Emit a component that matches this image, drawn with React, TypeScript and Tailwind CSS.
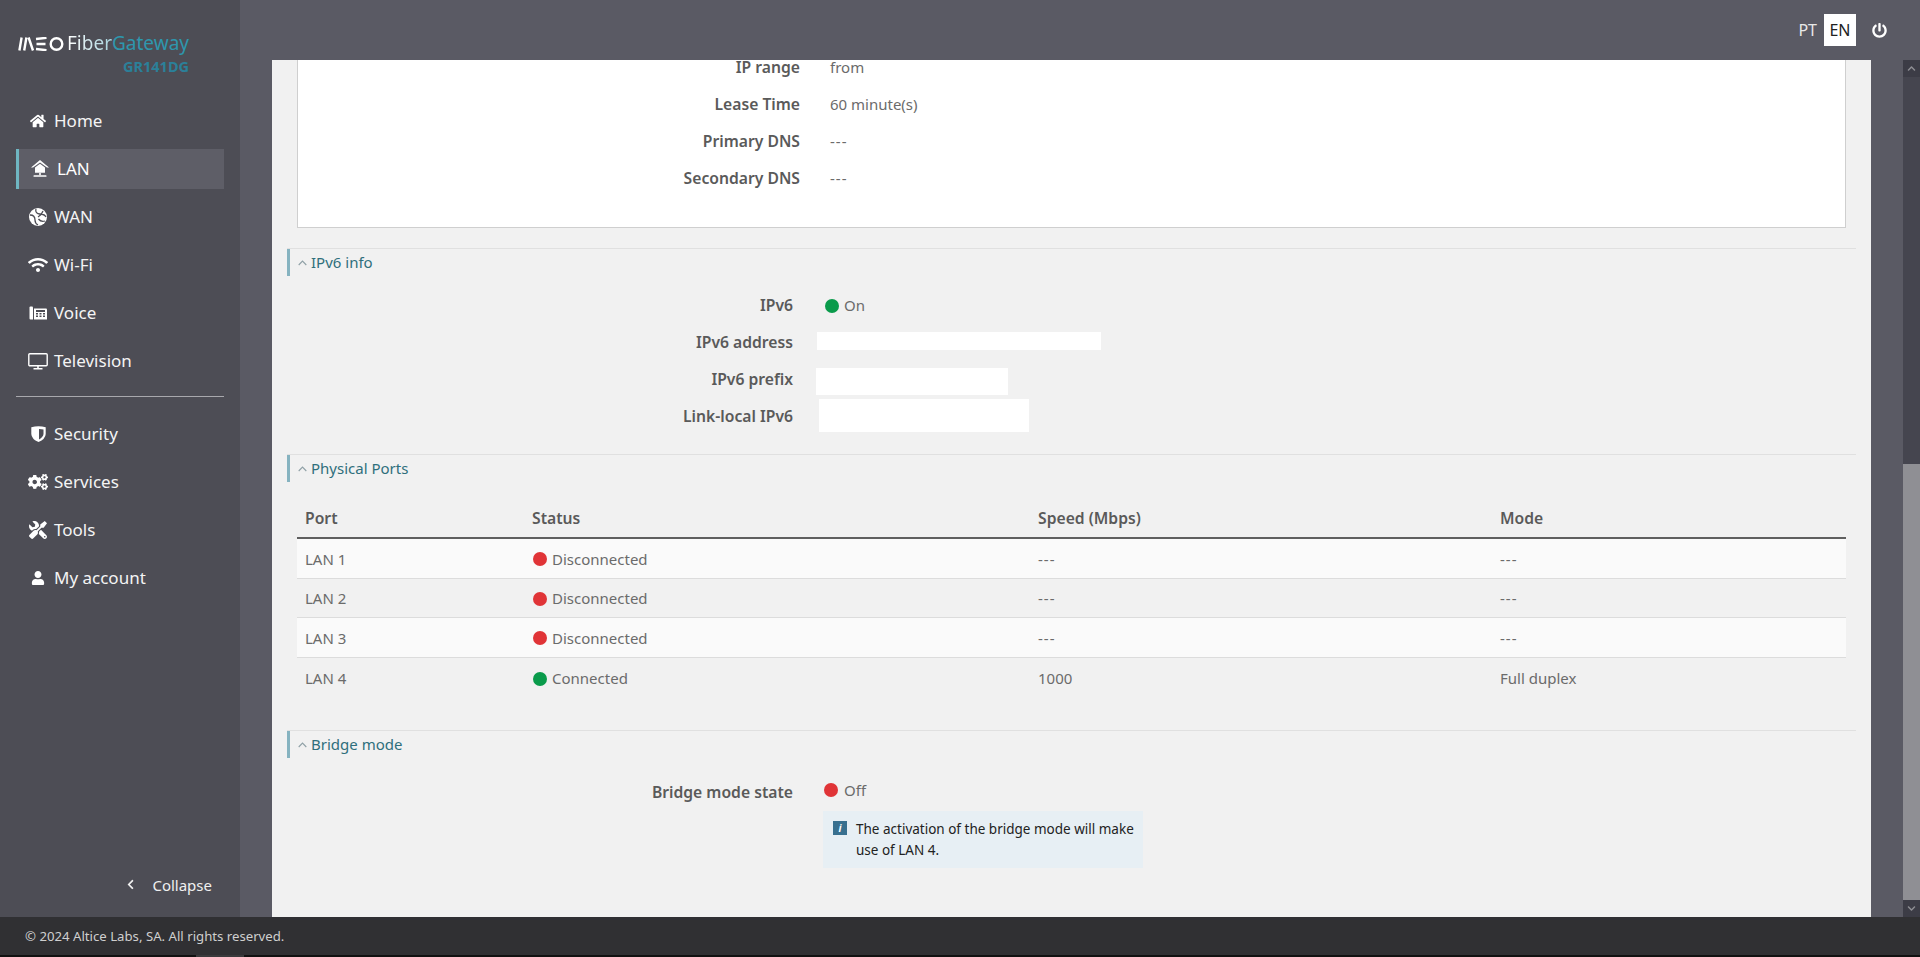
import React from "react";
import { FaHome, FaWifi, FaCogs, FaTools, FaUser, FaChevronLeft, FaChevronUp, FaChevronDown, FaPowerOff } from "react-icons/fa";

const LanIcon = () => (
  <svg width="18" height="18" viewBox="0 0 18 18" fill="#fff">
    <path d="M9 0 L18 7.6 L16 7.6 L9 2.4 L2 7.6 L0 7.6 Z" />
    <path d="M4 7.6 L9 3.8 L14 7.6 L14 12.8 L4 12.8 Z" />
    <rect x="8.2" y="12.8" width="1.6" height="2.4" />
    <rect x="2.5" y="15.2" width="13" height="1.6" rx="0.6" />
  </svg>
);

const GlobeIcon = () => (
  <svg width="18" height="18" viewBox="0 0 18 18">
    <circle cx="9" cy="9" r="9" fill="#fff" />
    <path d="M7 1 C6 4 8 6 11 6 C14 6 16 7 17 9 M1 7 C4 7 6 9 6 12 C6 14 7 16 9 17 M14 3 C13 6 11 8 9 9 M16 13 C13 14 11 13 9.5 11" fill="none" stroke="#4d4d55" strokeWidth="1.3" />
  </svg>
);

const ShieldIcon = () => (
  <svg width="15" height="16" viewBox="0 0 15 16">
    <path d="M0.3 1.2 Q7.5 -0.8 14.7 1.2 L14.7 8 Q14.5 13 7.5 16 Q0.5 13 0.3 8 Z" fill="#fff" />
    <path d="M8 3 Q10.5 3 12.5 3.5 L12.5 8 Q12.3 11 8 13.4 Z" fill="#4d4d55" />
  </svg>
);

const VoiceIcon = () => (
  <svg width="18" height="14" viewBox="0 0 18 14" fill="#fff">
    <path d="M0.5 1.5 Q0.5 0.5 1.5 0.5 L3 0.5 Q4 0.5 4 1.5 L4 13.5 L1.5 13.5 Q0.5 13.5 0.5 12.5 Z" />
    <path d="M5 2.5 L17 2.5 Q18 2.5 18 3.5 L18 13.5 L5 13.5 Z" />
    <g fill="#4d4d55">
      <rect x="7" y="4" width="9" height="2" />
      <rect x="7" y="7" width="2" height="1.5" /><rect x="10.5" y="7" width="2" height="1.5" /><rect x="14" y="7" width="2" height="1.5" />
      <rect x="7" y="9.5" width="2" height="1.5" /><rect x="10.5" y="9.5" width="2" height="1.5" /><rect x="14" y="9.5" width="2" height="1.5" />
    </g>
  </svg>
);

const TvIcon = () => (
  <svg width="20" height="17" viewBox="0 0 20 17" fill="none" stroke="#fff" strokeWidth="1.4">
    <rect x="0.8" y="0.8" width="18.4" height="11.9" rx="1" />
    <path d="M10 12.7 V15.5 M5.5 15.8 H14.5" strokeWidth="1.6" />
  </svg>
);

const Logo = () => (
  <svg width="46" height="14" viewBox="0 0 46 14" fill="none" stroke="#fff" strokeWidth="2.4">
    <path d="M3.6 0.5 L1.4 13.5 M8.4 0.5 L6.2 13.5 M10.6 0.5 L15 13.5" />
    <path d="M18 2 L28.5 0.8 M18.5 7 L27.5 7 M18 12 L28.5 13.2" />
    <circle cx="38.5" cy="7" r="5.8" />
  </svg>
);

const SmallChevron = () => (
  <svg width="9" height="6" viewBox="0 0 9 6" fill="none" stroke="#8fa0a6" strokeWidth="1.1" className="mr-[4px]">
    <path d="M0.7 5 L4.5 1 L8.3 5" />
  </svg>
);

const main = [
  { label: "Home", icon: <FaHome size={16} /> },
  { label: "LAN", icon: <LanIcon />, active: true },
  { label: "WAN", icon: <GlobeIcon /> },
  { label: "Wi-Fi", icon: <FaWifi size={20} /> },
  { label: "Voice", icon: <VoiceIcon /> },
  { label: "Television", icon: <TvIcon /> },
];
const secondary = [
  { label: "Security", icon: <ShieldIcon /> },
  { label: "Services", icon: <FaCogs size={20} /> },
  { label: "Tools", icon: <FaTools size={18} className="-scale-x-100" /> },
  { label: "My account", icon: <FaUser size={14} /> },
];

type Item = { label: string; icon: React.ReactNode; active?: boolean };

const NavItem = ({ item }: { item: Item }) =>
  item.active ? (
    <div className="flex h-10 my-1 items-center bg-[#5e5e67] border-l-[3px] border-[#6fb6c2] text-white text-[17px]">
      <span className="w-[20px] ml-[11px] flex justify-center">{item.icon}</span>
      <span className="ml-[7px]">{item.label}</span>
    </div>
  ) : (
    <div className="flex h-12 items-center text-[#f4f4f4] text-[17px]">
      <span className="w-[24px] ml-[10px] flex justify-center text-white">{item.icon}</span>
      <span className="ml-[4px]">{item.label}</span>
    </div>
  );

const Dot = ({ on }: { on: boolean }) => (
  <span className={`inline-block w-[14px] h-[14px] rounded-full ${on ? "bg-[#0a9b4b]" : "bg-[#e03437]"}`} />
);

const SectionHeader = ({ title }: { title: string }) => (
  <div className="border-t border-[#e0e0e0] h-[28px] flex items-start">
    <div className="flex items-center h-[27px] border-l-[3px] border-[#86b3c0] pl-[8px] text-[15px] text-[#2f6f7c]">
      <SmallChevron />
      <span>{title}</span>
    </div>
  </div>
);

const Val = ({ v }: { v: string }) => (
  <span className={v === "---" ? "tracking-[1px]" : ""}>{v}</span>
);

const CardRow = ({ label, value }: { label: string; value: string }) => (
  <div className="flex h-[37px] items-center">
    <div className="w-[502px] text-right text-[15.7px] font-semibold text-[#5a5a5a]">{label}</div>
    <div className="ml-[30px] text-[#6b6b6b]">
      <Val v={value} />
    </div>
  </div>
);

const InfoRow = ({ label, children }: { label: string; children: React.ReactNode }) => (
  <div className="flex h-[37px] items-center">
    <div className="w-[506px] text-right text-[15.7px] font-semibold text-[#5a5a5a]">{label}</div>
    {children}
  </div>
);

const ports = [
  { port: "LAN 1", on: false, status: "Disconnected", speed: "---", mode: "---", h: "h-[40px]" },
  { port: "LAN 2", on: false, status: "Disconnected", speed: "---", mode: "---", h: "h-[39px]" },
  { port: "LAN 3", on: false, status: "Disconnected", speed: "---", mode: "---", h: "h-[40px]" },
  { port: "LAN 4", on: true, status: "Connected", speed: "1000", mode: "Full duplex", h: "h-[40px]" },
];

export default function App() {
  return (
    <div className="h-[957px] w-[1920px] overflow-hidden flex flex-col font-['Noto_Sans','Open_Sans',sans-serif] text-[15px]">
      <div className="flex h-[917px]">
        <aside className="w-[240px] shrink-0 bg-[#4d4d55] flex flex-col px-[16px]">
          <div className="h-[97px] pt-[36px] pl-[2px]">
            <div className="flex items-center h-[15px]">
              <Logo />
              <span className="ml-[3px] text-[19px] leading-none whitespace-nowrap">
                <span className="bg-gradient-to-r from-white to-[#a5d3de] bg-clip-text text-transparent">Fiber</span>
                <span className="text-[#2e97ad]">Gateway</span>
              </span>
            </div>
            <div className="text-right pr-[35px] mt-[6px] text-[14.5px] leading-[18px] font-bold text-[#2b8099]">GR141DG</div>
          </div>
          {main.map((i) => (
            <NavItem key={i.label} item={i} />
          ))}
          <div className="border-t border-[#a8a8ad] mt-[11px] mb-[13px]" />
          {secondary.map((i) => (
            <NavItem key={i.label} item={i} />
          ))}
          <div className="mt-auto mb-[21px] flex items-center justify-end pr-[12px] text-[#f0f0f0] text-[15px]">
            <FaChevronLeft size={11} className="mr-[16px]" />
            <span>Collapse</span>
          </div>
        </aside>

        <div className="flex-1 bg-[#5a5a64] flex flex-col min-w-0">
          <header className="h-[60px] shrink-0 flex items-center justify-end text-[16px]">
            <span className="text-[#e8e8e8] mr-[7px]">PT</span>
            <span className="w-[32px] h-[32px] bg-white text-[#222] flex items-center justify-center">EN</span>
            <FaPowerOff size={15} className="text-white ml-[16px] mr-[33px]" />
          </header>
          <div className="flex flex-1 min-h-0">
            <main className="ml-[32px] w-[1599px] bg-[#f1f1f1] overflow-hidden">
              <div className="ml-[25px] -mt-[11px] w-[1549px] border border-[#cfcfcf] border-t-0 bg-white pb-[30px]">
                <CardRow label="IP range" value="from" />
                <CardRow label="Lease Time" value="60 minute(s)" />
                <CardRow label="Primary DNS" value="---" />
                <CardRow label="Secondary DNS" value="---" />
              </div>

              <div className="mx-[15px] mt-[20px]">
                <SectionHeader title="IPv6 info" />
                <div className="mt-[11px]">
                  <InfoRow label="IPv6">
                    <span className="ml-[32px] flex items-center text-[#6b6b6b]">
                      <Dot on />
                      <span className="ml-[5px]">On</span>
                    </span>
                  </InfoRow>
                  <InfoRow label="IPv6 address">
                    <span className="ml-[24px] -mt-[3px] w-[284px] h-[18px] bg-white" />
                  </InfoRow>
                  <InfoRow label="IPv6 prefix">
                    <span className="ml-[23px] mt-[4px] w-[192px] h-[27px] bg-white" />
                  </InfoRow>
                  <InfoRow label="Link-local IPv6">
                    <span className="ml-[26px] -mt-[2px] w-[210px] h-[33px] bg-white" />
                  </InfoRow>
                </div>
              </div>

              <div className="mx-[15px] mt-[19px]">
                <SectionHeader title="Physical Ports" />
                <div className="mx-[10px] mt-[19px]">
                  <div className="grid grid-cols-[227px_506px_462px_1fr] h-[38px] items-center border-b-2 border-[#5f5f5f] text-[15.7px] font-semibold text-[#5a5a5a]">
                    <span className="pl-[8px]">Port</span>
                    <span className="pl-[8px]">Status</span>
                    <span className="pl-[8px]">Speed (Mbps)</span>
                    <span className="pl-[8px]">Mode</span>
                  </div>
                  {ports.map((p, i) => (
                    <div
                      key={p.port}
                      className={`grid grid-cols-[227px_506px_462px_1fr] pt-[1px] items-center text-[#6b6b6b] ${p.h} ${i % 2 === 0 ? "bg-[#fafafa]" : ""} ${i < 3 ? "border-b border-[#dcdcdc]" : ""}`}
                    >
                      <span className="pl-[8px]">{p.port}</span>
                      <span className="pl-[9px] flex items-center">
                        <Dot on={p.on} />
                        <span className="ml-[5px]">{p.status}</span>
                      </span>
                      <span className="pl-[8px]">
                        <Val v={p.speed} />
                      </span>
                      <span className="pl-[8px]">
                        <Val v={p.mode} />
                      </span>
                    </div>
                  ))}
                </div>
              </div>

              <div className="mx-[15px] mt-[32px]">
                <SectionHeader title="Bridge mode" />
                <div className="flex mt-[20px]">
                  <div className="w-[506px] text-right text-[15.7px] font-semibold text-[#5a5a5a] pt-[3px]">Bridge mode state</div>
                  <div className="ml-[30px]">
                    <div className="flex items-center h-[24px] text-[#6b6b6b] pl-[1px]">
                      <Dot on={false} />
                      <span className="ml-[6px]">Off</span>
                    </div>
                    <div className="mt-[9px] w-[320px] h-[57px] bg-[#e7eff4] flex pl-[10px] pt-[10px] text-[13.5px] leading-[21px] text-[#222]">
                      <span className="shrink-0 w-[14px] h-[14px] bg-[#38708f] text-white text-[10px] leading-[14px] text-center italic font-bold mr-[9px]">i</span>
                      <span className="w-[280px] -mt-[2px]">The activation of the bridge mode will make use of LAN 4.</span>
                    </div>
                  </div>
                </div>
              </div>
            </main>
            <div className="ml-[32px] w-[17px] bg-[#45454f] flex flex-col">
              <div className="h-[17px] bg-[#3c3c46] flex items-center justify-center text-[#8e8e94]">
                <FaChevronUp size={9} />
              </div>
              <div className="flex-1" />
              <div className="h-[436px] bg-[#8f8f94]" />
              <div className="h-[17px] bg-[#3c3c46] flex items-center justify-center text-[#8e8e94]">
                <FaChevronDown size={9} />
              </div>
            </div>
          </div>
        </div>
      </div>
      <footer className="h-[38px] bg-[#303033] flex items-center pl-[25px] pt-[2px] text-[13.2px] text-[#cfcfcf]">
        © 2024 Altice Labs, SA. All rights reserved.
      </footer>
      <div className="h-[2px] flex bg-[#111]">
        <div className="w-[196px]" />
        <div className="w-[48px] bg-[#3a3a3c]" />
      </div>
    </div>
  );
}
